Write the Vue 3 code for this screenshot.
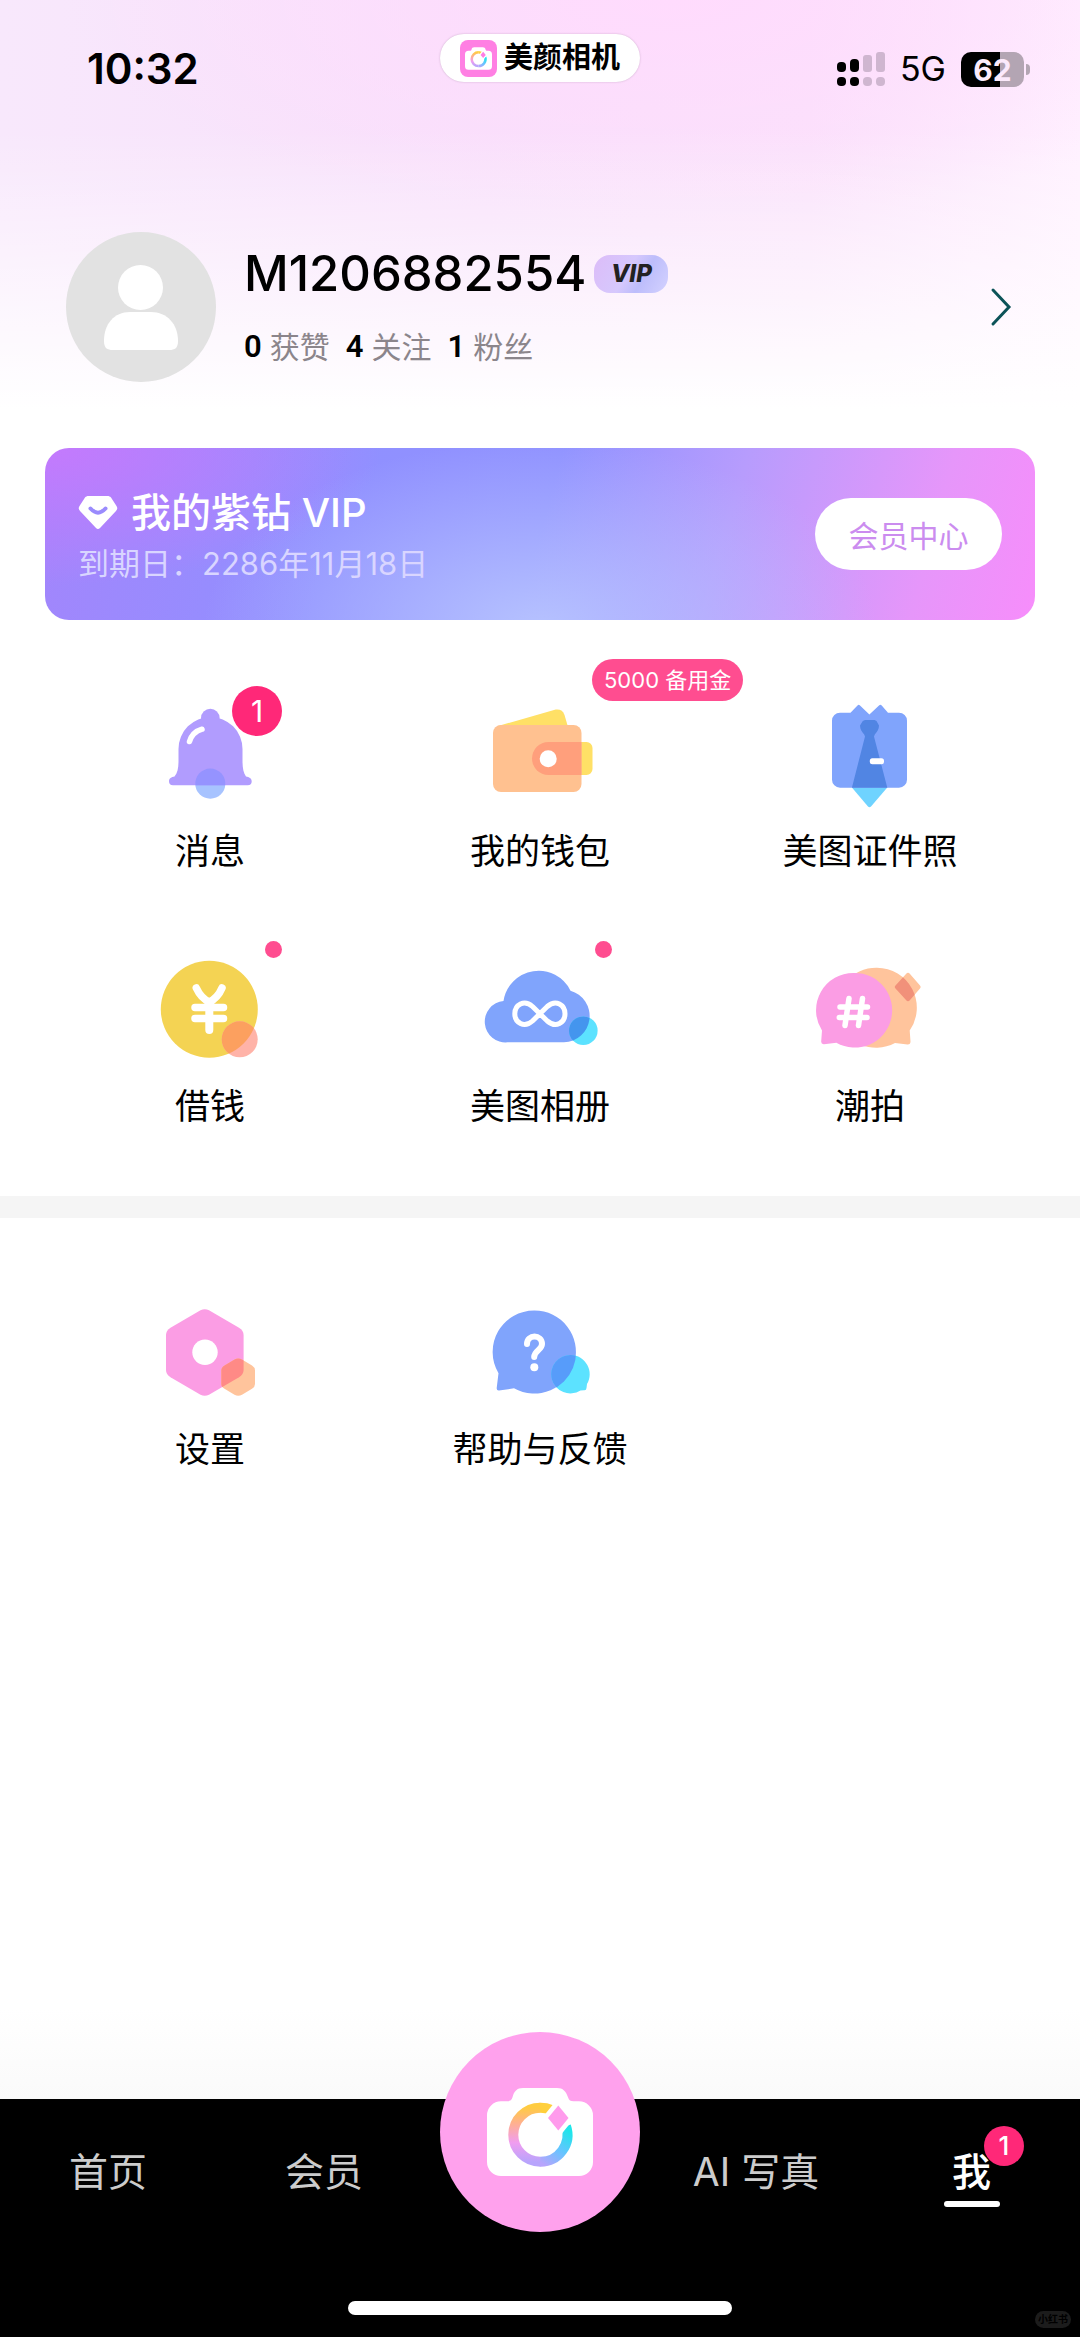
<template>
  <div class="page">
    <svg class="sprite" aria-hidden="true">
      <defs>
        <linearGradient id="ringLeft" x1="0" y1="73" x2="0" y2="128" gradientUnits="userSpaceOnUse">
          <stop offset="0" stop-color="#ffcc40" />
          <stop offset="0.3" stop-color="#ffb090" />
          <stop offset="0.65" stop-color="#f09df0" />
          <stop offset="1" stop-color="#b8a4fc" />
        </linearGradient>
        <linearGradient id="ringRight" x1="100" y1="128" x2="126" y2="94" gradientUnits="userSpaceOnUse">
          <stop offset="0" stop-color="#b8a4fc" />
          <stop offset="0.5" stop-color="#66c4ff" />
          <stop offset="1" stop-color="#1ee6ea" />
        </linearGradient>
        <symbol id="camera" viewBox="47 50 106 96">
          <path d="M61 67.300h6c3 0 4.500-1 5.500-4 1.500-6 4.500-9.300 10.500-9.300h34c6 0 9 3.300 11 9.300 1 3 2.500 4 5.500 4h5.500a14 14 0 0 1 14 14V128a14 14 0 0 1-14 14H61a14 14 0 0 1-14-14V81.300a14 14 0 0 1 14-14Z" fill="#fff" />
          <g fill="none" stroke-width="10">
            <path d="M99.500 73.700H100A27 27 0 0 1 120 82" stroke="#ffcf3c" />
            <path d="M100.300 73.700A27 27 0 0 0 100.300 127.700" stroke="url(#ringLeft)" />
            <path d="M100 127.700A27 27 0 0 0 126 92" stroke="url(#ringRight)" />
          </g>
          <path d="M118.300 64 134.500 84 118.300 104 102 84Z" fill="#fff" />
          <path d="M118.300 71.500 128.500 84 118.300 96.500 108 84Z" stroke-linejoin="round" />
        </symbol>
      </defs>
    </svg>

    <header class="status-bar">
      <span class="time">10:32</span>
      <div class="app-pill">
        <span class="app-logo"><svg><use href="#camera" /></svg></span>
        <span>美颜相机</span>
      </div>
      <div class="status-right">
        <svg class="signal" viewBox="0 0 48 36">
          <rect x="0" y="11" width="9" height="10" rx="4" />
          <rect x="13" y="8" width="9" height="13" rx="4" />
          <rect x="0" y="26" width="9" height="9" rx="4" />
          <rect x="13" y="26" width="9" height="9" rx="4" />
          <g fill="#cfb6d0">
            <rect x="26" y="4" width="9" height="17" rx="3" />
            <rect x="39" y="1" width="9" height="20" rx="3" />
            <rect x="26" y="26" width="9" height="9" rx="4" />
            <rect x="39" y="26" width="9" height="9" rx="4" />
          </g>
        </svg>
        <span class="network">5G</span>
        <span class="battery">62</span>
      </div>
    </header>

    <a class="profile" href="#profile">
      <svg class="avatar" viewBox="0 0 150 150">
        <circle cx="75" cy="75" r="75" fill="#e2e2e2" />
        <circle cx="74.500" cy="55.500" r="22.500" fill="#fff" />
        <path d="M64 80h21c16 0 27 12 27 29 0 7-3 9-9 9H47c-6 0-9-2-9-9 0-17 10-29 26-29Z" fill="#fff" />
      </svg>
      <div class="profile-text">
        <div class="name-row">
          <span class="name">M1206882554</span>
          <span class="vip-badge">VIP</span>
        </div>
        <div class="stats">
          <span v-for="s in stats" :key="s.label" class="stat"><b>{{ s.count }}</b>{{ s.label }}</span>
        </div>
      </div>
      <svg class="chevron" viewBox="0 0 22 40">
        <path d="M3 3 19 20 3 37" fill="none" stroke="#0c5358" stroke-width="3" stroke-linecap="round" />
      </svg>
    </a>

    <section class="vip-card">
      <div class="vip-text">
        <h2>
          <svg class="diamond" viewBox="0 0 40 36">
            <path d="M10.500 1h19c1.500 0 2.500.5 3.500 1.500l5.500 8.500c1.200 2 1 3.500-.5 5L22 33c-1.300 1.400-2.700 1.400-4 0L2 16C.5 14.500.300 13 1.500 11L7 2.500C8 1.500 9 1 10.500 1Z" fill="#fff" />
            <path d="M12.500 13.500c5 5.500 10 5.500 15 0" fill="none" stroke="#9a8bfd" stroke-width="4" stroke-linecap="round" />
          </svg>
          我的紫钻 VIP
        </h2>
        <p>到期日：2286年11月18日</p>
      </div>
      <button class="vip-button" type="button">会员中心</button>
    </section>

    <main class="menus">
      <div v-for="(group, i) in groups" :key="i" class="menu">
        <button v-for="item in group" :key="item.icon" class="menu-item" type="button">
          <span class="icon-wrap">
            <svg class="icon" viewBox="0 0 110 110">
              <g v-if="item.icon === 'bell'">
                <circle cx="55.300" cy="83.700" r="15" fill="#a7c3ff" />
                <circle cx="55.300" cy="18" r="9.300" fill="#b19cfe" />
                <path d="M23.500 49a32 32 0 0 1 64 0V61c0 7 1 12 3.500 15.500 3 .5 5.700 1.800 5.700 4.800a4 4 0 0 1-4 4H18a4 4 0 0 1-4-4c0-3 2.500-4.300 5.500-4.800C22.500 73 23.500 68 23.500 61Z" fill="#b19cfe" />
                <path d="M40.400 85.300A15 15 0 1 1 70.200 85.300Z" fill="#9593ff" />
                <path d="M47 29.200C41 31 36.500 35 34.500 41.500" fill="none" stroke="#fff" stroke-width="5.500" stroke-linecap="round" />
              </g>
              <g v-else-if="item.icon === 'wallet'">
                <path d="M13 26 69 10c5-1.400 9 .3 10.500 5L83 27H13Z" fill="#ffe066" />
                <path d="M96 42h5.500a6 6 0 0 1 6 6v21a6 6 0 0 1-6 6H96Z" fill="#ffe066" />
                <rect x="8" y="25" width="88.500" height="67" rx="8" fill="#ffc190" />
                <path d="M63.500 42h33v33h-33a16.500 16.500 0 0 1 0-33Z" fill="#ff9f7c" />
                <circle cx="63.200" cy="58.700" r="8.500" fill="#fff" />
              </g>
              <g v-else-if="item.icon === 'tie'">
                <path d="M36.900 87.500H72.300L56 106.500q-1.500 1.500-3 0Z" fill="#6fd3ff" />
                <path d="M25 12.700H35.500L42.500 5.500q1.200-1.500 2.500 0L54.400 14.500 64 5.500q1.400-1.500 2.700 0L73 12.700H84a8 8 0 0 1 8 8v59a8 8 0 0 1-8 8H25a8 8 0 0 1-8-8v-59a8 8 0 0 1 8-8Z" fill="#80a4fc" />
                <path d="M50 20h9.500l2 1L64 25.500c0 4-2 6-4.200 9l-.8 2L72.300 87.700H36.900L50 36.500l-.8-2C47 31.500 45 29.500 45 25.500L47.800 21Z" fill="#5185e3" />
                <rect x="54.800" y="58.300" width="14.200" height="6" rx="2.500" fill="#fff" />
              </g>
              <g v-else-if="item.icon === 'coin'">
                <clipPath id="coinClip"><circle cx="54.300" cy="54.300" r="48.500" /></clipPath>
                <circle cx="54.300" cy="54.300" r="48.500" fill="#f4d353" />
                <g fill="none" stroke="#fff" stroke-width="7.500" stroke-linecap="round">
                  <path d="M41.300 33C44.500 40 49 44.500 54.300 47 59.500 44.500 64 40 67 33M40 52.500H68.500M40 63.500H68.500" />
                  <path d="M54.300 47V75" stroke-width="8" />
                </g>
                <circle cx="84.700" cy="84.300" r="18" fill="#ffb3a8" />
                <circle cx="84.700" cy="84.300" r="18" fill="#fca05f" clip-path="url(#coinClip)" />
              </g>
              <g v-else-if="item.icon === 'cloud'">
                <clipPath id="cloudClip"><path :d="cloudPath" /></clipPath>
                <path :d="cloudPath" fill="#80a4fc" />
                <circle cx="98.300" cy="75.700" r="14.300" fill="#5ce2ff" />
                <circle cx="98.300" cy="75.700" r="14.300" fill="#4495ee" clip-path="url(#cloudClip)" />
                <path d="M54.900 58.800 47.500 51.500C39 44 29.800 50 29.800 58.800S39 73.500 47.500 66L62.300 51.500C71 44 80 50 80 58.800S71 73.500 62.300 66Z" fill="none" stroke="#fff" stroke-width="5" stroke-linejoin="round" />
              </g>
              <g v-else-if="item.icon === 'chat'">
                <clipPath id="chatClip"><path :d="chatPath" /></clipPath>
                <path :d="gemPath" fill="#ffc49c" />
                <path :d="chatPath" fill="#ffc49c" />
                <path :d="gemPath" fill="#f1917a" clip-path="url(#chatClip)" />
                <path d="M39.300 18A37.300 37.300 0 1 1 21.400 87.700L9 89.300Q6 89.500 6.200 86.500L7 75.500A37.300 37.300 0 0 1 39.300 18Z" fill="#fb9de4" />
                <path d="M34 43.500 30 70.500M47.500 43.500 43.500 70.500M25 51.900H52.500M24.300 62.500H52" fill="none" stroke="#fff" stroke-width="5.500" stroke-linecap="round" />
              </g>
              <g v-else-if="item.icon === 'settings'">
                <clipPath id="hexClip"><path :d="hexPath" /></clipPath>
                <path :d="hexPath" fill="#fb9de4" />
                <circle cx="50" cy="54.300" r="12.700" fill="#fff" />
                <path :d="smallHexPath" fill="#ffc49c" />
                <path :d="smallHexPath" fill="#ff8a86" clip-path="url(#hexClip)" />
              </g>
              <g v-else>
                <clipPath id="helpClip"><circle cx="49.500" cy="54" r="41.600" /></clipPath>
                <path d="M49.500 12.400A41.600 41.600 0 1 1 29 90.300L14 92.500Q11.500 92.700 11.700 90L13.500 75.300A41.600 41.600 0 0 1 49.500 12.400Z" fill="#80a4fc" />
                <path :d="helpPath" fill="#5ce2ff" />
                <path :d="helpPath" fill="#579cfa" clip-path="url(#helpClip)" />
                <path d="M42 46C42 36 57 36 57 46 57 52 49.200 52.500 49.200 59" fill="none" stroke="#fff" stroke-width="6" stroke-linecap="round" />
                <circle cx="49.300" cy="69.300" r="4" fill="#fff" />
              </g>
            </svg>
            <span v-if="item.count" class="count">{{ item.count }}</span>
            <span v-if="item.dot" class="dot"></span>
            <span v-if="item.tag" class="tag">{{ item.tag }}</span>
          </span>
          <span class="label">{{ item.label }}</span>
        </button>
      </div>
    </main>

    <footer class="bottom">
      <nav class="tabs">
        <a href="#home" class="tab">首页</a>
        <a href="#member" class="tab">会员</a>
        <button type="button" class="camera-button" aria-label="相机"><svg><use href="#camera" /></svg></button>
        <a href="#portrait" class="tab portrait">AI 写真</a>
        <a href="#me" class="tab active">我<span class="tab-count">1</span></a>
      </nav>
      <div class="home-indicator"></div>
      <span class="watermark">小红书</span>
    </footer>
  </div>
</template>

<script setup>
const stats = [
  { count: 0, label: '获赞' },
  { count: 4, label: '关注' },
  { count: 1, label: '粉丝' },
]

const groups = [
  [
    { icon: 'bell', label: '消息', count: 1 },
    { icon: 'wallet', label: '我的钱包', tag: '5000 备用金' },
    { icon: 'tie', label: '美图证件照' },
    { icon: 'coin', label: '借钱', dot: true },
    { icon: 'cloud', label: '美图相册', dot: true },
    { icon: 'chat', label: '潮拍' },
  ],
  [
    { icon: 'settings', label: '设置' },
    { icon: 'help', label: '帮助与反馈' },
  ],
]

// shapes that are drawn once and reused as clip areas
const cloudPath = 'M22.500 87.300A20.700 20.700 0 0 1 18.500 46A35.500 35.500 0 0 1 85.500 35.700A26.300 26.300 0 0 1 79 87.300Z'
const chatPath = 'M62 12.700A40 40 0 0 1 94.700 75.500L95.500 86.500Q95.500 89.700 92.500 89.500L80 88A40 40 0 1 1 62 12.700Z'
const gemPath = 'M91 19Q93 16.500 95 19L105 30.500Q106.500 32 105 33.500L95 45Q93 47.500 91 45L80.500 33.500Q79 32 80.500 30.500Z'
const hexPath = 'M45.500 12.300Q49.700 10 54 12.300L84 29.700Q88.600 32.500 88.600 37V72Q88.600 76.500 84 79.300L54 96.700Q49.700 99 45.500 96.700L15.500 79.300Q11 76.500 11 72V37Q11 32.500 15.500 29.700Z'
const smallHexPath = 'M79.500 61.500Q83.200 59.500 87 61.500L97 67.500Q100 69.300 100 72.500V86Q100 89 97 90.800L87 96.800Q83.200 98.800 79.500 96.800L69.500 90.800Q66.300 89 66.300 86V72.500Q66.300 69.300 69.500 67.500Z'
const helpPath = 'M86 57A19.200 19.200 0 0 1 102 86L101.500 90Q101.300 92.700 99 92.300L95.500 92.500A19.200 19.200 0 1 1 86 57Z'
</script>

<style>
body {
  margin: 0;
}
</style>

<style scoped>
.page {
  display: flex;
  flex-direction: column;
  min-height: 100vh;
  overflow: hidden;
  font-family: Inter, "Noto Sans CJK SC", sans-serif;
  color: #000;
  background:
    linear-gradient(to bottom, rgba(255, 255, 255, 0) 130px, rgba(255, 255, 255, 0.5) 270px, #fff 410px),
    radial-gradient(ellipse 600px 220px at 62% 0, #ffdbfd, rgba(255, 219, 253, 0)),
    linear-gradient(to right, #f8e8fc, #f8e0fb 45%, #fae2fb 75%, #fff1ff 100%);
  background-color: #fff;
  background-size: 100% 420px;
  background-repeat: no-repeat;
}
a {
  color: inherit;
  text-decoration: none;
}
button {
  padding: 0;
  border: 0;
  background: none;
  font-family: inherit;
  color: inherit;
  cursor: pointer;
}
.sprite {
  position: absolute;
  width: 0;
  height: 0;
}

/* status bar */
.status-bar {
  display: grid;
  grid-template-columns: 1fr auto 1fr;
  padding: 34px 50px 0;
}
.time {
  padding-left: 37px;
  font-size: 42px;
  font-weight: 600;
  line-height: 70px;
}
.app-pill {
  display: flex;
  align-items: center;
  align-self: start;
  gap: 7px;
  box-sizing: border-box;
  height: 48px;
  padding: 0 20px;
  border-radius: 24px;
  background: #fff;
  box-shadow: 0 0 2px rgba(90, 60, 90, 0.3);
  font-size: 29px;
  font-weight: 700;
  line-height: 48px;
}
.app-logo {
  display: flex;
  align-items: center;
  justify-content: center;
  width: 37px;
  height: 37px;
  border-radius: 8px;
  background: #ff7fe3;
}
.app-logo svg {
  width: 27px;
  height: 25px;
  fill: #ff7fe3;
}
.status-right {
  display: flex;
  align-items: center;
  justify-content: flex-end;
}
.signal {
  width: 48px;
  height: 36px;
}
.network {
  margin: 0 15px;
  font-size: 34px;
  line-height: 40px;
}
.battery {
  position: relative;
  width: 63px;
  height: 35px;
  margin-right: 6px;
  border-radius: 10px;
  background: linear-gradient(to right, #000 62%, #b3a5b3 62%);
  color: #fbeafb;
  font-size: 30px;
  font-weight: 700;
  line-height: 36px;
  text-align: center;
}
.battery::after {
  content: "";
  position: absolute;
  top: 12px;
  right: -6px;
  width: 4px;
  height: 11px;
  border-radius: 0 4px 4px 0;
  background: #b3a5b3;
}

/* profile */
.profile {
  display: flex;
  align-items: center;
  gap: 28px;
  padding: 128px 68px 0 66px;
}
.avatar {
  width: 150px;
  height: 150px;
}
.profile-text {
  flex: 1;
}
.name-row {
  display: flex;
  align-items: center;
  gap: 8px;
  margin-bottom: 20px;
}
.name {
  font-size: 49px;
  font-weight: 500;
  line-height: 60px;
}
.vip-badge {
  width: 74px;
  height: 38px;
  border-radius: 16px;
  background: linear-gradient(120deg, #dcbcf8, #d6c8fd 45%, #bdbdfb 65%, #d4d2ff);
  color: #222;
  font-size: 24px;
  font-style: italic;
  font-weight: 800;
  line-height: 38px;
  text-align: center;
}
.stats {
  display: flex;
  gap: 16px;
  color: #8b858b;
  font-size: 30px;
  line-height: 46px;
}
.stat {
  display: flex;
  gap: 8px;
}
.stat b {
  color: #000;
  font-family: Roboto, sans-serif;
  font-size: 31px;
  font-weight: 600;
}
.chevron {
  width: 22px;
  height: 40px;
}

/* vip card */
.vip-card {
  display: flex;
  align-items: center;
  justify-content: space-between;
  box-sizing: border-box;
  min-height: 172px;
  margin: 66px 45px 0;
  padding: 0 33px;
  border-radius: 24px;
  background:
    radial-gradient(ellipse 34% 110% at 50% 105%, #b6c2ff, rgba(182, 194, 255, 0)),
    radial-gradient(ellipse 34% 80% at 0 0, #c47afd, rgba(196, 122, 253, 0)),
    linear-gradient(105deg, #a385fc, #9090ff 30%, #9092ff 50%, #b79cfd 68%, #e696fa 88%, #f78dfb);
  color: #fff;
}
.vip-text {
  padding-top: 8px;
}
.vip-text h2 {
  display: flex;
  align-items: center;
  gap: 13px;
  margin: 0;
  font-size: 40px;
  font-weight: 500;
  line-height: 52px;
}
.diamond {
  width: 40px;
  height: 36px;
}
.vip-text p {
  margin: 0;
  color: #d9d5ff;
  font-size: 31px;
  line-height: 50px;
}
.vip-button {
  width: 187px;
  height: 72px;
  border-radius: 36px;
  background: #fff;
  color: #cb8cef;
  font-size: 30px;
}

/* menus */
.menu {
  display: grid;
  grid-template-columns: repeat(3, 1fr);
  row-gap: 78px;
  padding: 80px 45px 64px;
}
.menu + .menu {
  border-top: 22px solid #f5f5f5;
}
.menu-item {
  display: flex;
  flex-direction: column;
  align-items: center;
  gap: 15px;
}
.icon-wrap {
  position: relative;
}
.icon {
  display: block;
  width: 110px;
  height: 110px;
  overflow: visible;
}
.label {
  font-size: 35px;
  line-height: 52px;
}
.count,
.dot {
  position: absolute;
  top: -14px;
  right: -17px;
}
.count {
  width: 50px;
  height: 50px;
  border-radius: 50%;
  background: #ff2878;
  color: #fff;
  font-size: 30px;
  line-height: 50px;
}
.dot {
  width: 17px;
  height: 17px;
  border-radius: 50%;
  background: #ff4d90;
}
.tag {
  position: absolute;
  top: -41px;
  left: 107px;
  padding: 0 12px;
  border-radius: 21px;
  background: #ff4d90;
  color: #fff;
  font-size: 22px;
  line-height: 42px;
  white-space: nowrap;
}

/* bottom bar */
.bottom {
  position: relative;
  margin-top: auto;
  padding-bottom: 22px;
  background: #000;
}
.bottom::before {
  content: "";
  position: absolute;
  right: 0;
  bottom: 100%;
  left: 0;
  height: 90px;
  background: linear-gradient(to bottom, #fff, #fafafa);
}
.tabs {
  display: grid;
  grid-template-columns: repeat(5, 1fr);
  justify-items: center;
  height: 108px;
  margin-bottom: 94px;
}
.tab {
  position: relative;
  padding-top: 46px;
  color: #ccc;
  font-size: 39px;
  line-height: 54px;
}
.active {
  color: #fff;
  font-weight: 500;
}
.active::after {
  content: "";
  display: block;
  width: 56px;
  height: 6px;
  margin: 2px -8px 0;
  border-radius: 3px;
  background: #fff;
}
.tab-count {
  position: absolute;
  top: 27px;
  left: 32px;
  width: 40px;
  height: 40px;
  border-radius: 50%;
  background: #ff2878;
  font-size: 26px;
  line-height: 40px;
  text-align: center;
}
.camera-button {
  position: absolute;
  top: -67px;
  left: calc(50% - 100px);
  display: flex;
  align-items: center;
  justify-content: center;
  width: 200px;
  height: 200px;
  border-radius: 50%;
  background: #ffa1ed;
}
.portrait {
  grid-column: 4;
}
.camera-button svg {
  width: 106px;
  height: 96px;
  fill: #ff9bec;
}
.home-indicator {
  width: 384px;
  height: 14px;
  margin: 0 auto;
  border-radius: 7px;
  background: #fff;
}
.watermark {
  position: absolute;
  right: 9px;
  bottom: 9px;
  width: 36px;
  border-radius: 9px;
  background: #1c1c1c;
  color: #000;
  font-size: 10px;
  font-weight: 700;
  line-height: 17px;
  text-align: center;
}
</style>
